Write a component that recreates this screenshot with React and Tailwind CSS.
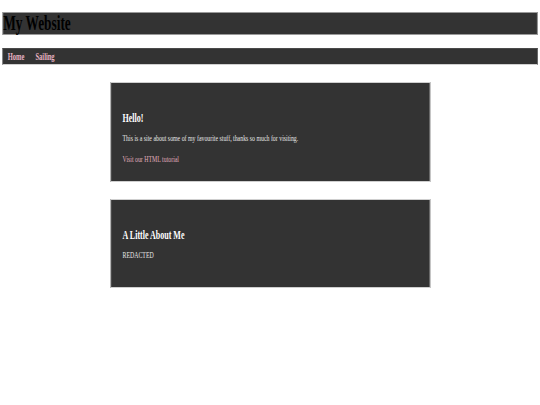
import React from "react";

const serif = { fontFamily: '"Liberation Serif", "Times New Roman", serif' };

function Card({ title, children, className }) {
	return (
		<section
			className={`w-[492px] mx-auto bg-[#333333] border border-[#cfcfcf] px-[18px] text-[#e8e8e8] ${className}`}
		>
			<h2 className="text-[12.3px] leading-[14px] font-bold text-white">{title}</h2>
			{children}
		</section>
	);
}

export default function App() {
	return (
		<div className="w-[540px] h-[405px] overflow-hidden bg-white" style={serif}>
			{/* page is drawn wide, then squeezed horizontally */}
			<div className="w-[831px] origin-top-left scale-x-[0.65]">
				<div className="pt-[12px] px-[4px]">
					<h1 className="bg-[#333333] border border-[#9a9a9a] text-black font-bold text-[20.5px] leading-[21px]">
						My Website
					</h1>
				</div>

				{/* Nav */}
				<nav className="mt-[13px] mx-[4px] bg-[#333333] border border-[#4a4a4a] border-b-[#d0d0d0] h-[17px] flex items-center gap-[17px] pl-[7px]">
					<a className="text-[10px] font-bold text-[#e8b4c4]">Home</a>
					<a className="text-[10px] font-bold text-[#e8b4c4]">Sailing</a>
				</nav>

				<Card title="Hello!" className="mt-[17px] pt-[28px] pb-[16px]">
					<p className="mt-[8px] text-[9px] leading-[11px]">
						This is a site about some of my favourite stuff, thanks so much for visiting.
					</p>
					<a className="block mt-[10px] text-[9px] leading-[11px] text-[#e0aebe]">
						Visit our HTML tutorial
					</a>
				</Card>

				<Card title="A Little About Me" className="mt-[17px] pt-[28px] pb-[26px]">
					<p className="mt-[8px] text-[9px] leading-[11px]">REDACTED</p>
				</Card>
			</div>
		</div>
	);
}
